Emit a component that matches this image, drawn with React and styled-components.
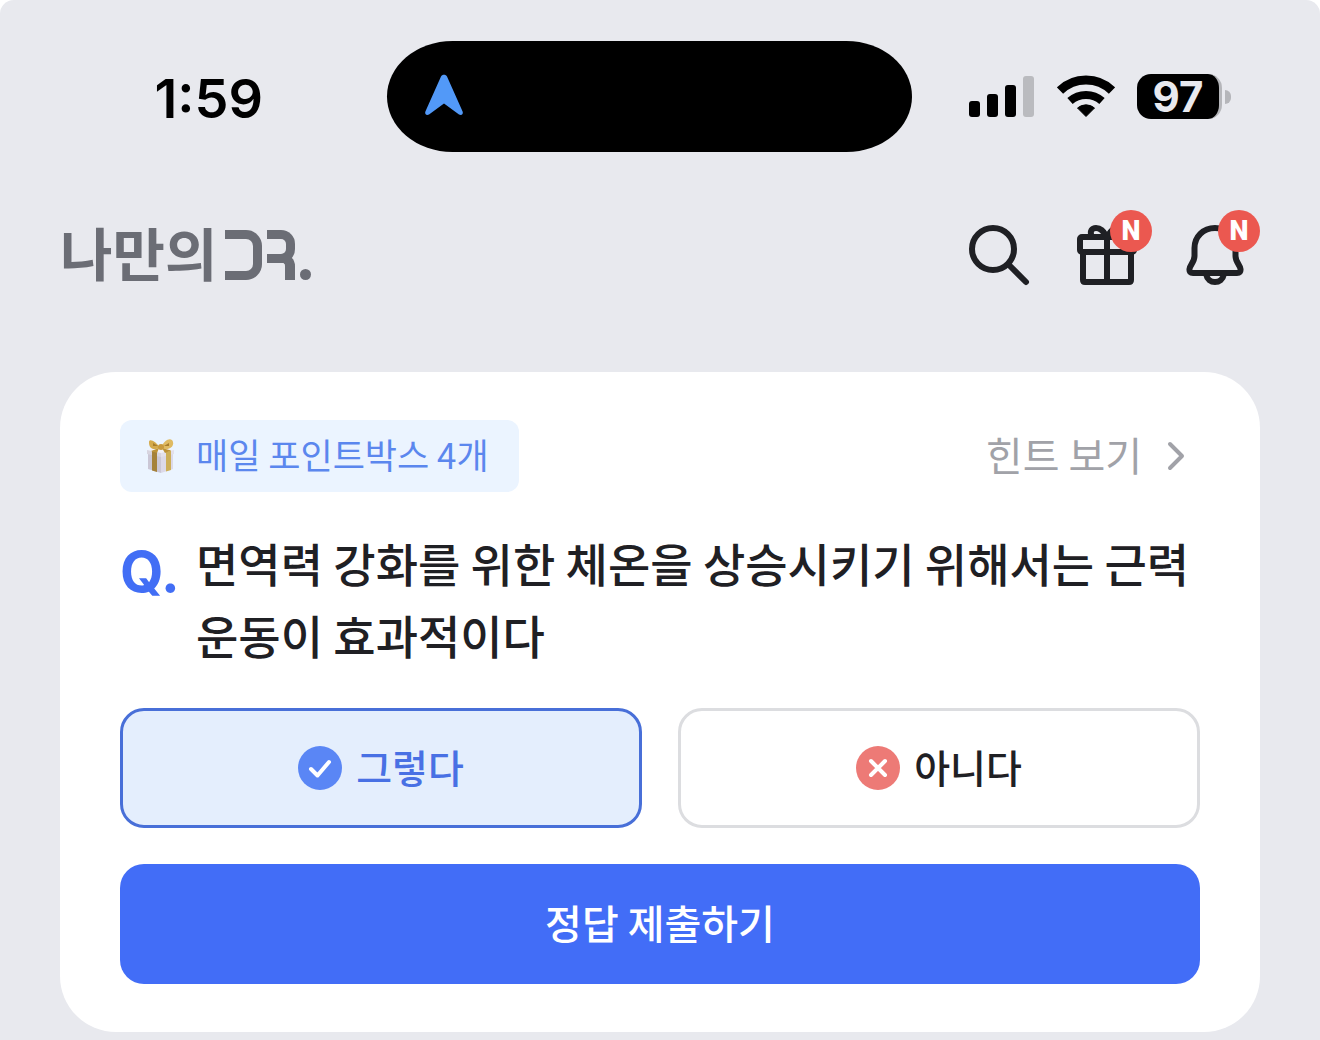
import React, { useState } from 'react';
import styled, { createGlobalStyle } from 'styled-components';

const GlobalStyle = createGlobalStyle`
  * {
    box-sizing: border-box;
  }

  body {
    margin: 0;
    background: #ffffff;
    font-family: "Noto Sans CJK KR", sans-serif;
    color: #1f2024;
  }

  button {
    font-family: inherit;
    cursor: pointer;
  }
`;

const Page = styled.div`
  min-height: 100vh;
  padding-top: 41px;
  background: #e8e9ee;
  border-radius: 14px 14px 0 0;
`;

const StatusBar = styled.div`
  display: grid;
  grid-template-columns: 1fr 525px 1fr;
  align-items: center;
  padding: 0 49px 0 27px;
`;

const Time = styled.time`
  padding: 4px 0 0 4px;
  font-family: Inter, sans-serif;
  font-size: 54px;
  line-height: 60px;
  font-weight: 600;
  color: #000000;
  text-align: center;
`;

const Island = styled.div`
  display: flex;
  align-items: center;
  height: 111px;
  padding: 0 37px 4px;
  background: #000000;
  border-radius: 66px / 56px;
`;

const Indicators = styled.div`
  display: flex;
  justify-content: flex-end;
  align-items: center;
  gap: 22px;
  padding-right: 40px;
`;

const Battery = styled.div`
  display: flex;
  align-items: center;
  gap: 3px;
`;

const BatteryLevel = styled.span`
  width: 85px;
  height: 45px;
  border-radius: 14px;
  border-right: 3px solid #b5b6ba;
  background: #000000;
  color: #e8e9ee;
  font-family: Inter, sans-serif;
  font-size: 42px;
  line-height: 45px;
  font-weight: 700;
  text-align: center;
`;

const BatteryTip = styled.span`
  width: 6px;
  height: 14px;
  border-radius: 0 6px 6px 0;
  background: #b5b6ba;
`;

const Header = styled.header`
  display: flex;
  justify-content: space-between;
  align-items: center;
  height: 72px;
  margin: 67px 69px 81px 60px;
`;

const Logo = styled.a`
  display: flex;
  align-items: center;
  gap: 8px;
  color: #6b6d75;
  font-size: 57px;
  line-height: 64px;
  font-weight: 700;
  text-decoration: none;
`;

const LogoText = styled.span`
  padding-bottom: 8px;
`;

const Label = styled.span`
  padding-bottom: 4px;
`;

const LogoMark = styled.span`
  display: flex;
  align-items: flex-end;
  gap: 5px;
  height: 50px;
`;

const MarkBracket = styled.span`
  width: 37px;
  height: 50px;
  border: 9px solid currentColor;
  border-left: 0;
  border-radius: 0 16px 16px 0;
`;

const MarkHook = styled.span`
  width: 28px;
  height: 50px;
`;

const HookTop = styled.span`
  display: block;
  height: 33px;
  border: 9px solid currentColor;
  border-left: 0;
  border-radius: 0 14px 14px 0;
`;

const HookLeg = styled.span`
  display: block;
  height: 26px;
  margin-top: -9px;
  border-top: 9px solid currentColor;
  border-right: 10px solid currentColor;
  border-radius: 0 12px 0 0;
`;

const MarkDot = styled.span`
  width: 11px;
  height: 11px;
  border-radius: 50%;
  background: currentColor;
`;

const Actions = styled.nav`
  display: flex;
  gap: 36px;
`;

const IconButton = styled.button`
  position: relative;
  width: 72px;
  height: 72px;
  padding: 0;
  border: 0;
  background: none;
  color: #1f2024;

  svg {
    display: block;
  }
`;

const NewBadge = styled.span`
  position: absolute;
  top: -9px;
  right: -9px;
  width: 42px;
  height: 42px;
  border-radius: 50%;
  background: #eb5850;
  color: #ffffff;
  font-family: Roboto, sans-serif;
  font-size: 27px;
  line-height: 42px;
  font-weight: 900;
  text-align: center;
`;

const Card = styled.main`
  margin: 0 60px;
  padding: 48px 60px;
  background: #ffffff;
  border-radius: 56px;
`;

const CardTop = styled.div`
  display: flex;
  justify-content: space-between;
  align-items: center;
`;

const PointBadge = styled.div`
  display: flex;
  align-items: center;
  gap: 20px;
  height: 72px;
  padding: 0 30px 0 24px;
  border-radius: 12px;
  background: #ebf4ff;
  color: #5b87ee;
  font-size: 35px;
  line-height: 60px;
`;

const HintLink = styled.a`
  display: flex;
  align-items: center;
  gap: 16px;
  padding-right: 6px;
  color: #a1a2a8;
  font-size: 40px;
  line-height: 60px;
  text-decoration: none;
`;

const Question = styled.div`
  display: grid;
  grid-template-columns: 76px 1fr;
  margin: 34px 0 38px;
`;

const QuestionMark = styled.span`
  padding-top: 10px;
  color: #426ef5;
  font-family: Inter, sans-serif;
  font-size: 56px;
  line-height: 72px;
  font-weight: 700;
`;

const QuestionText = styled.h1`
  margin: 0;
  font-size: 46px;
  line-height: 72px;
  font-weight: 500;
`;

const Choices = styled.div`
  display: grid;
  grid-template-columns: 1fr 1fr;
  gap: 36px;
`;

const Choice = styled.button`
  display: flex;
  justify-content: center;
  align-items: center;
  gap: 14px;
  height: 120px;
  padding: 0;
  border: 3px solid ${props => (props.$active ? '#486fd8' : '#dcdde0')};
  border-radius: 24px;
  background: ${props => (props.$active ? '#e4eefd' : '#ffffff')};
  color: ${props => (props.$active ? '#4870e4' : '#1f2024')};
  font-size: 39px;
  line-height: 60px;
  font-weight: 500;
`;

const Submit = styled.button`
  display: block;
  width: 100%;
  height: 120px;
  margin-top: 36px;
  padding: 0 0 4px;
  border: 0;
  border-radius: 24px;
  background: #426df7;
  color: #ffffff;
  font-size: 40px;
  line-height: 60px;
  font-weight: 500;
`;

const strokeProps = {
  fill: 'none',
  stroke: 'currentColor',
  strokeWidth: 6,
  strokeLinecap: 'round',
  strokeLinejoin: 'round'
};

const LocationArrow = () => (
  <svg width="40" height="42" viewBox="0 0 40 42" aria-hidden="true">
    <path
      d="M17 2.5C18 .3 22 .3 23 2.5L38.6 37.5C39.6 40 37.5 42 35 40.6L20 29.5L5 40.6C2.5 42 .4 40 1.4 37.5Z"
      fill="#5299f8"
    />
  </svg>
);

const Signal = () => (
  <svg width="66" height="45" viewBox="0 0 66 45" aria-hidden="true">
    <rect x="0" y="27" width="11" height="16" rx="3" />
    <rect x="18" y="20" width="11" height="23" rx="3" />
    <rect x="36" y="11" width="11" height="32" rx="3" />
    <rect x="54" y="2" width="11" height="41" rx="3" fill="#babbbf" />
  </svg>
);

const Wifi = () => (
  <svg width="58" height="45" viewBox="0 0 58 45" aria-hidden="true">
    <path d="M3 16.5A37.5 37.5 0 0 1 55 16.5" fill="none" stroke="#000" strokeWidth="9" />
    <path d="M13 27A24 24 0 0 1 45 27" fill="none" stroke="#000" strokeWidth="8" />
    <path d="M29 42.5L20.5 34A13 13 0 0 1 37.5 34Z" stroke="#000" strokeLinejoin="round" />
  </svg>
);

const SearchIcon = () => (
  <svg width="72" height="72" viewBox="0 0 72 72" aria-hidden="true" {...strokeProps}>
    <circle cx="30" cy="30" r="21" />
    <path d="M46 46L63 63" />
  </svg>
);

const GiftIcon = () => (
  <svg width="72" height="72" viewBox="0 0 72 72" aria-hidden="true" {...strokeProps}>
    <rect x="9" y="18" width="54" height="15" rx="2" />
    <path d="M12 33V61Q12 63 14 63H58Q60 63 60 61V33M36 18V63" />
    <path d="M20.5 17C18.5 12 21 9 25 9C31 9 33 14 36 18C39 14 41 9 47 9C51 9 53.5 12 51.5 17" />
  </svg>
);

const BellIcon = () => (
  <svg width="72" height="72" viewBox="0 0 72 72" aria-hidden="true" {...strokeProps}>
    <path d="M36 9C24 9 15.5 18 15.5 29V37C15.5 43 11 46 10.5 50Q10 54 14 54H58Q62 54 61.5 50C61 46 56.5 43 56.5 37V29C56.5 18 48 9 36 9Z" />
    <path d="M27 55C28 60.5 32 63 36 63S44 60.5 45 55" />
  </svg>
);

const GiftBox = () => (
  <svg width="32" height="36" viewBox="0 0 32 36" aria-hidden="true">
    <path d="M4 14L17 17V35L4 31Z" fill="#cbc7d6" />
    <path d="M17 17L29 14V31L17 35Z" fill="#dcd9e8" />
    <path d="M3 12L16 9L30 12L17 15Z" fill="#f3f1f6" />
    <path d="M3 12L17 15V19L3 16Z" fill="#d8d5e0" />
    <path d="M17 15L30 12V16L17 19Z" fill="#e3e0ec" />
    <path d="M8 13L13 14V34L8 32.5Z" fill="#a5813a" />
    <path d="M22 14L27 12.5V32L22 33.5Z" fill="#cdae58" />
    <path d="M16 10C12 3 5 0 5 4C5 9 7 13 16 10Z" fill="#d4aa4c" />
    <path d="M17 10C20 1 28 -1 29 4C30 9 25 13 17 10Z" fill="#dfba62" />
    <path d="M15 10L7 13L13 15ZM18 10L27 12.5L21 15Z" fill="#bd9238" />
    <path d="M9 5L14 8L9 8ZM25 5L20 8L25 8Z" fill="#a87d2d" />
    <circle cx="17" cy="9" r="3" fill="#c89a3e" />
  </svg>
);

const Chevron = () => (
  <svg width="36" height="36" viewBox="0 0 36 36" aria-hidden="true" {...strokeProps} strokeWidth="4">
    <path d="M12 6L24 18L12 30" />
  </svg>
);

const CheckMark = () => (
  <svg width="44" height="44" viewBox="0 0 44 44" aria-hidden="true">
    <circle cx="22" cy="22" r="22" fill="#5a86f5" />
    <path d="M13 23L19.5 29.5L31 16" {...strokeProps} stroke="#fff" strokeWidth="4" />
  </svg>
);

const CrossMark = () => (
  <svg width="44" height="44" viewBox="0 0 44 44" aria-hidden="true">
    <circle cx="22" cy="22" r="22" fill="#ed7a76" />
    <path d="M15 15L29 29M29 15L15 29" {...strokeProps} stroke="#fff" strokeWidth="4" />
  </svg>
);

const App = () => {
  const [answer, setAnswer] = useState('yes');

  return (
    <Page>
      <GlobalStyle />
      <StatusBar>
        <Time>1:59</Time>
        <Island>
          <LocationArrow />
        </Island>
        <Indicators>
          <Signal />
          <Wifi />
          <Battery>
            <BatteryLevel>97</BatteryLevel>
            <BatteryTip />
          </Battery>
        </Indicators>
      </StatusBar>

      <Header>
        <Logo href="#">
          <LogoText>나만의</LogoText>
          <LogoMark>
            <MarkBracket />
            <MarkHook>
              <HookTop />
              <HookLeg />
            </MarkHook>
            <MarkDot />
          </LogoMark>
        </Logo>
        <Actions>
          <IconButton type="button" aria-label="검색">
            <SearchIcon />
          </IconButton>
          <IconButton type="button" aria-label="선물">
            <GiftIcon />
            <NewBadge>N</NewBadge>
          </IconButton>
          <IconButton type="button" aria-label="알림">
            <BellIcon />
            <NewBadge>N</NewBadge>
          </IconButton>
        </Actions>
      </Header>

      <Card>
        <CardTop>
          <PointBadge>
            <GiftBox />
            <Label>매일 포인트박스 4개</Label>
          </PointBadge>
          <HintLink href="#">
            <Label>힌트 보기</Label>
            <Chevron />
          </HintLink>
        </CardTop>

        <Question>
          <QuestionMark>Q.</QuestionMark>
          <QuestionText>
            면역력 강화를 위한 체온을 상승시키기 위해서는 근력 운동이 효과적이다
          </QuestionText>
        </Question>

        <Choices>
          <Choice
            type="button"
            $active={answer === 'yes'}
            aria-pressed={answer === 'yes'}
            onClick={() => setAnswer('yes')}
          >
            <CheckMark />
            <Label>그렇다</Label>
          </Choice>
          <Choice
            type="button"
            $active={answer === 'no'}
            aria-pressed={answer === 'no'}
            onClick={() => setAnswer('no')}
          >
            <CrossMark />
            <Label>아니다</Label>
          </Choice>
        </Choices>

        <Submit type="button">정답 제출하기</Submit>
      </Card>
    </Page>
  );
};

export default App;
